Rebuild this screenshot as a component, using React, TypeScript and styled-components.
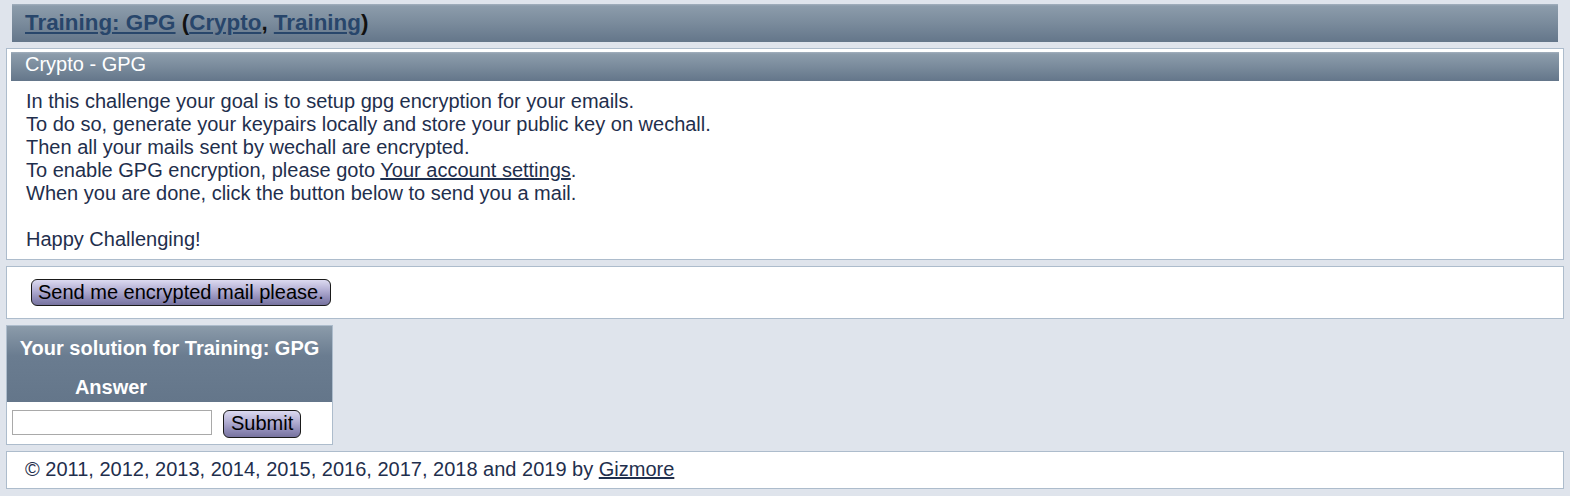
import React from "react";
import styled, { createGlobalStyle } from "styled-components";

const Global = createGlobalStyle`
  html, body { margin: 0; padding: 0; }
  body {
    background: #dfe4ec;
    font-family: "Liberation Sans", Arial, sans-serif;
    font-size: 20px;
    line-height: 23px;
    color: #1f2f4d;
  }
`;

const headGradient = `linear-gradient(to bottom, #a3b1be 0px, #8c9cab 2px, #7a8b9c 50%, #64768a 100%)`;

const Page = styled.div`
  display: flex;
  flex-direction: column;
  gap: 6px;
  padding: 4px 6px 8px;
`;

const TitleBar = styled.h1`
  margin: 0 6px;
  padding: 6px 13px;
  font-size: 22.4px;
  line-height: 26px;
  font-weight: bold;
  color: #111;
  background: ${headGradient};
`;

const HeadLink = styled.a`
  color: #28466b;
  text-decoration: underline;
`;

const Box = styled.div<{ $pad?: string }>`
  background: #fff;
  border: 1px solid #adbccc;
  padding: ${(p) => p.$pad || "3px 4px"};
`;

const BoxTitle = styled.div`
  padding: 1px 14px 5px;
  color: #fff;
  background: ${headGradient};
`;

const BoxText = styled.div`
  padding: 9px 15px 5px;
`;

const TextLink = styled.a`
  color: #1f2f4d;
  text-decoration: underline;
`;

const Button = styled.button`
  font-family: "Liberation Sans", Arial, sans-serif;
  font-size: 20px;
  line-height: 23px;
  color: #000;
  padding: 1px 6px;
  border: 1px solid #1a1a1a;
  border-radius: 6px;
  background: linear-gradient(to bottom, #dcdaf0 0%, #b4b0d4 40%, #8e8ab6 75%, #77739f 100%);
`;

const SolutionTable = styled.div`
  align-self: flex-start;
  width: 325px;
  display: grid;
  grid-template-columns: 208px 1fr;
  background: #fff;
  border: 1px solid #adbccc;
`;

const SolutionHead = styled.div`
  grid-column: 1 / 3;
  display: grid;
  grid-template-columns: 208px 1fr;
  color: #fff;
  font-weight: bold;
  background: linear-gradient(to bottom, #8b9baa 0px, #6a7c90 30px, #64768a 100%);
`;

const HeadCell = styled.div<{ $span?: boolean; $pad: string }>`
  grid-column: ${(p) => (p.$span ? "1 / 3" : "auto")};
  text-align: center;
  padding: ${(p) => p.$pad};
`;

const Cell = styled.div<{ $pad: string }>`
  padding: ${(p) => p.$pad};
  display: flex;
  align-items: center;
`;

const Input = styled.input`
  box-sizing: border-box;
  width: 200px;
  height: 25px;
  border: 1px solid #a9a9a9;
  padding: 0 2px;
  font-family: "Liberation Sans", Arial, sans-serif;
  font-size: 16px;
`;

const SubmitButton = styled(Button)`
  height: 28px;
  padding: 1px 7px 2px;
`;

export default function App() {
  return (
    <>
      <Global />
      <Page>
        <TitleBar>
          <HeadLink href="#">Training: GPG</HeadLink> (
          <HeadLink href="#">Crypto</HeadLink>, <HeadLink href="#">Training</HeadLink>)
        </TitleBar>

        <Box>
          <BoxTitle>Crypto - GPG</BoxTitle>
          <BoxText>
            In this challenge your goal is to setup gpg encryption for your emails.
            <br />
            To do so, generate your keypairs locally and store your public key on wechall.
            <br />
            Then all your mails sent by wechall are encrypted.
            <br />
            To enable GPG encryption, please goto <TextLink href="#">Your account settings</TextLink>.
            <br />
            When you are done, click the button below to send you a mail.
            <br />
            <br />
            Happy Challenging!
          </BoxText>
        </Box>

        <Box $pad="12px 0 12px 24px">
          <Button type="button">Send me encrypted mail please.</Button>
        </Box>

        <SolutionTable>
          <SolutionHead>
            <HeadCell $span $pad="11px 0 8px">Your solution for Training: GPG</HeadCell>
            <HeadCell $pad="8px 0 3px">Answer</HeadCell>
            <HeadCell $pad="0" />
          </SolutionHead>
          <Cell $pad="8px 0 9px 5px">
            <Input type="text" />
          </Cell>
          <Cell $pad="7px 0 6px 8px">
            <SubmitButton type="button">Submit</SubmitButton>
          </Cell>
        </SolutionTable>

        <Box $pad="6px 18px 7px">
          © 2011, 2012, 2013, 2014, 2015, 2016, 2017, 2018 and 2019 by <TextLink href="#">Gizmore</TextLink>
        </Box>
      </Page>
    </>
  );
}
